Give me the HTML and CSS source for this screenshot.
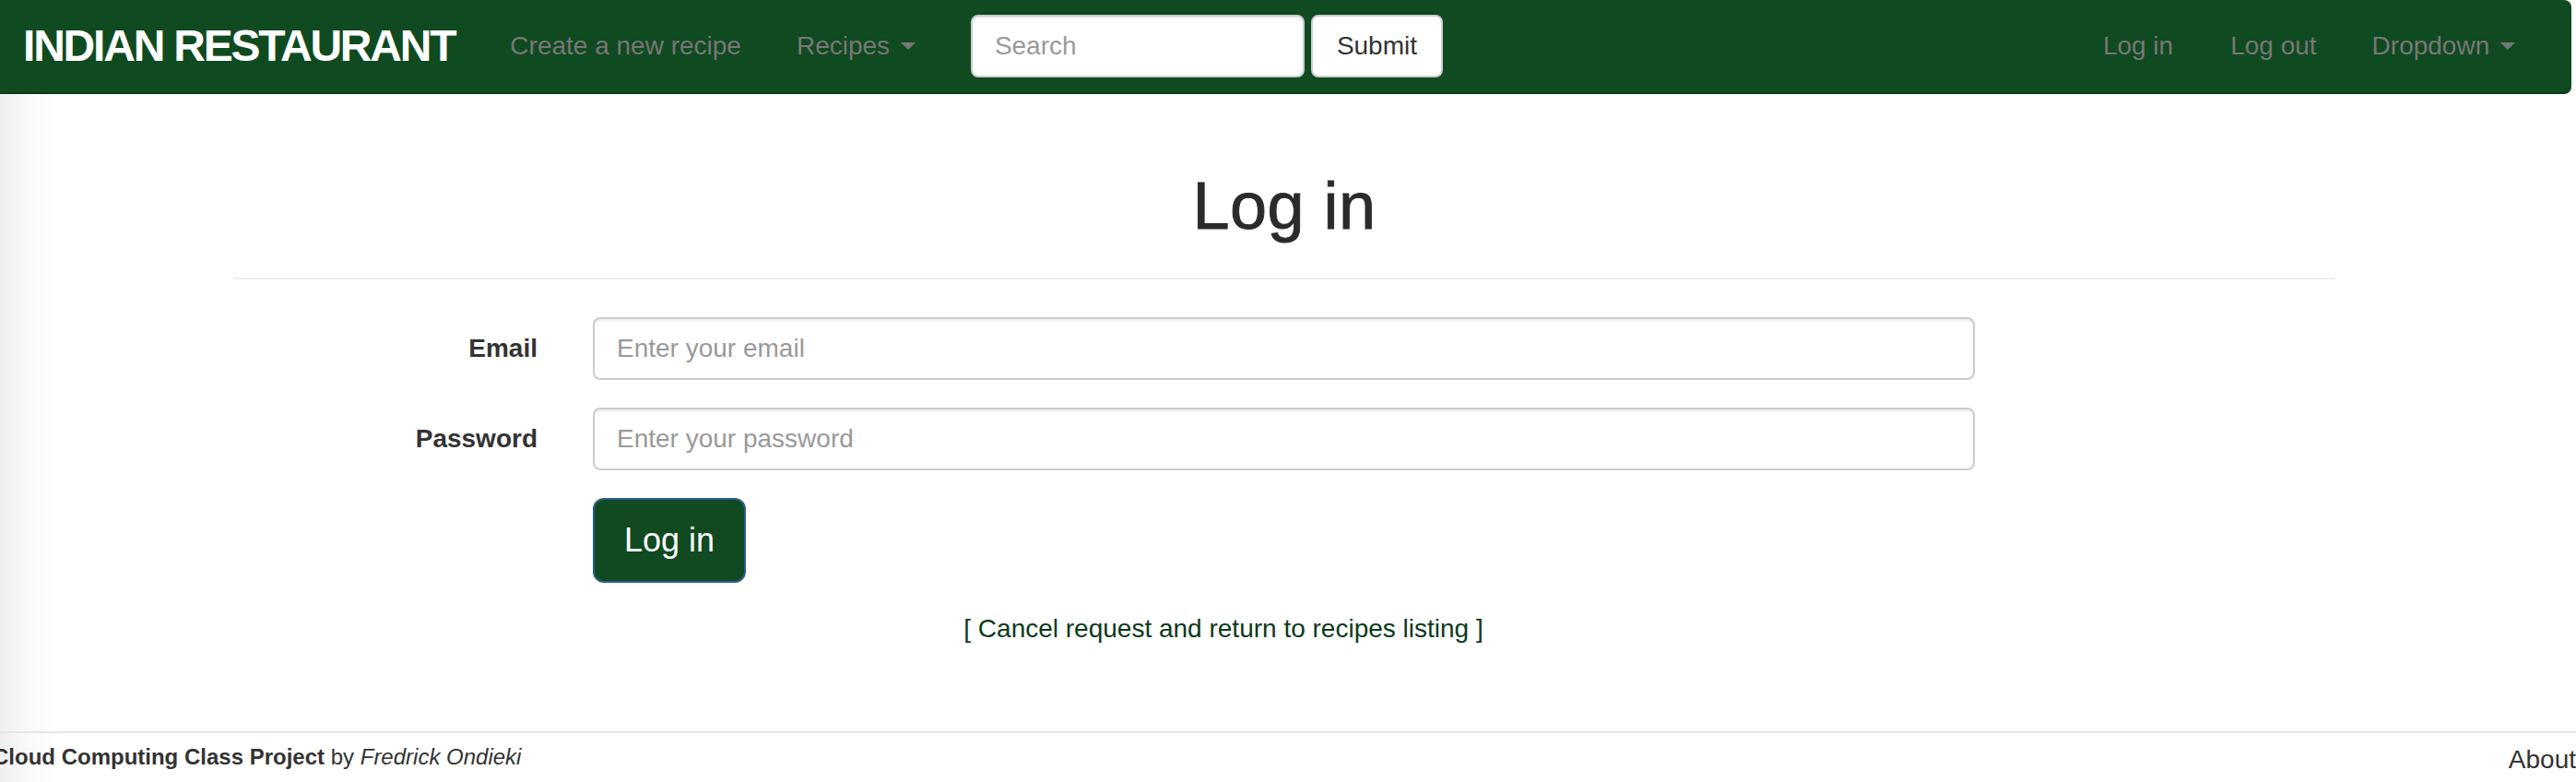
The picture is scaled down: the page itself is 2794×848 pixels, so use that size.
FILE: index.html
```html
<!DOCTYPE html>
<html lang="en">
<head>
<meta charset="utf-8">
<title>Log in - Indian Restaurant</title>
<link rel="stylesheet" href="styles.css">
</head>
<body>
<nav class="navbar">
  <a class="brand" href="#">INDIAN RESTAURANT</a>
  <ul class="nav">
    <li><a href="#">Create a new recipe</a></li>
    <li><a href="#">Recipes <span class="caret"></span></a></li>
  </ul>
  <form class="search">
    <input class="search-input" type="text" placeholder="Search">
    <button class="btn-default" type="button">Submit</button>
  </form>
  <ul class="nav nav-right">
    <li><a href="#">Log in</a></li>
    <li><a href="#">Log out</a></li>
    <li><a href="#">Dropdown <span class="caret"></span></a></li>
  </ul>
</nav>
<div class="page">
  <main class="container">
    <div class="page-header"><h1>Log in</h1></div>
    <form class="form-h">
      <div class="group">
        <label class="label">Email</label>
        <input class="control" type="email" placeholder="Enter your email">
      </div>
      <div class="group">
        <label class="label">Password</label>
        <input class="control" type="password" placeholder="Enter your password">
      </div>
      <div class="group">
        <span></span>
        <div><button class="btn-lg" type="button">Log in</button></div>
      </div>
    </form>
    <p class="cancel"><a href="#">[ Cancel request and return to recipes listing ]</a></p>
  </main>
</div>
<footer class="footer">
  <div class="credit"><strong>Cloud Computing Class Project</strong> by <em>Fredrick Ondieki</em></div>
  <a class="about" href="#">About</a>
</footer>
</body>
</html>
```
FILE: styles.css
```css
html, body {
  margin: 0;
  padding: 0;
}
body {
  font-family: "Liberation Sans", Arial, Helvetica, sans-serif;
  font-size: 28px;
  line-height: 1.42857;
  color: #333;
  background: #fff linear-gradient(to right, #efefef 0, #f9f9f9 30px, #fff 64px);
  min-height: 848px;
  overflow: hidden;
}
a { text-decoration: none; }

/* navbar */
.navbar {
  display: flex;
  align-items: center;
  height: 100px;
  margin-right: 5px;
  padding: 0 0 0 25px;
  background: #104a21;
  border-bottom: 2px solid #0b3917;
  border-radius: 0 8px 8px 0;
}
.brand {
  color: #fff;
  font-weight: bold;
  font-size: 48px;
  letter-spacing: -2.2px;
  line-height: 100px;
  margin-right: 30px;
  white-space: nowrap;
}
.nav {
  display: flex;
  list-style: none;
  margin: 0;
  padding: 0;
}
.nav a {
  display: block;
  padding: 0 30px;
  line-height: 100px;
  color: #777;
  white-space: nowrap;
}
.nav-right {
  margin-left: auto;
  margin-right: 31px;
}
.nav-right li:first-child a {
  padding-right: 32px;
}
.nav-right li:nth-child(2) a {
  padding-right: 30px;
}
.caret {
  display: inline-block;
  width: 0;
  height: 0;
  margin-left: 4px;
  vertical-align: middle;
  border-top: 8px solid #777;
  border-left: 8px solid transparent;
  border-right: 8px solid transparent;
  position: relative;
  top: -2px;
}
.search {
  display: flex;
  gap: 7px;
  margin: 0 0 0 30px;
}
.search-input {
  width: 362px;
  height: 68px;
  box-sizing: border-box;
  padding: 0 24px;
  font: 28px "Liberation Sans", Arial, sans-serif;
  color: #555;
  background: #fff;
  border: 2px solid #ccc;
  border-radius: 8px;
  box-shadow: inset 0 2px 2px rgba(0,0,0,.075);
  outline: none;
}
.search-input::placeholder,
.control::placeholder { color: #999; opacity: 1; }
.btn-default {
  height: 68px;
  padding: 0 26px;
  font: 28px "Liberation Sans", Arial, sans-serif;
  color: #333;
  background: #fff;
  border: 2px solid #ccc;
  border-radius: 8px;
}

/* content */
.page {
  padding-right: 8px;
}
.container {
  width: 2280px;
  margin: 0 auto;
}
.page-header {
  margin: 82px 0 41px;
  padding-bottom: 38px;
  border-bottom: 2px solid #eee;
  text-align: center;
}
.page-header h1 {
  margin: 0;
  font-size: 72px;
  font-weight: 500;
  line-height: 79px;
  color: #2b2b2b;
  -webkit-text-stroke: 0.9px #2b2b2b;
  letter-spacing: 0.5px;
}
.form-h {
  margin: 0;
}
.group {
  display: grid;
  grid-template-columns: 330px 1499px;
  column-gap: 60px;
  margin-bottom: 30px;
}
.label {
  text-align: right;
  font-weight: bold;
  padding-top: 14px;
  line-height: 40px;
}
.control {
  height: 68px;
  box-sizing: border-box;
  width: 100%;
  padding: 0 24px;
  font: 28px "Liberation Sans", Arial, sans-serif;
  color: #555;
  background: #fff;
  border: 2px solid #ccc;
  border-radius: 8px;
  box-shadow: inset 0 2px 2px rgba(0,0,0,.075);
  outline: none;
}
.btn-lg {
  height: 92px;
  padding: 0 32px;
  font: 36px "Liberation Sans", Arial, sans-serif;
  color: #fff;
  background: #114a21;
  border: 2px solid #2a5d8c;
  border-radius: 12px;
}
.cancel {
  margin: 0;
  padding-right: 132px;
  text-align: center;
  line-height: 40px;
}
.cancel a {
  color: #0b3a19;
}

/* footer */
.footer {
  display: flex;
  justify-content: space-between;
  align-items: flex-start;
  margin-top: 91px;
  border-top: 2px solid #e6e6e6;
}
.credit {
  margin-left: -8px;
  padding-top: 9px;
  font-size: 24px;
  line-height: 34px;
  color: #333;
}
.credit strong { font-weight: bold; }
.about {
  padding-top: 9px;
  line-height: 40px;
  color: #333;
}
```
